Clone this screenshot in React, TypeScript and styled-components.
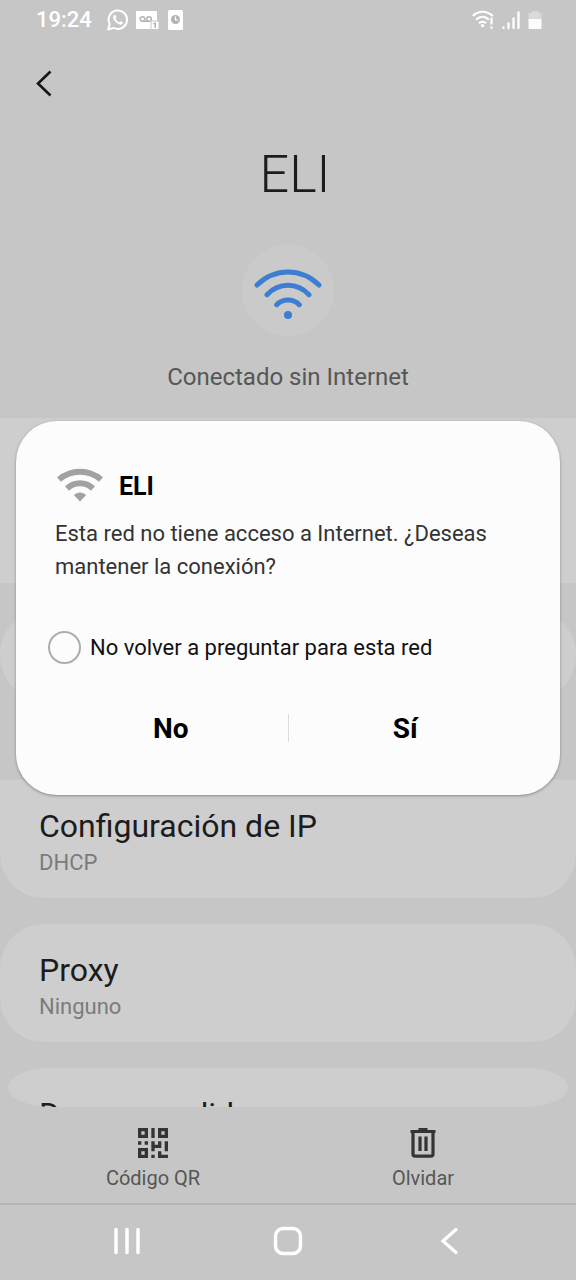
import React from 'react';
import styled, { createGlobalStyle } from 'styled-components';

const GlobalStyle = createGlobalStyle`
  * { box-sizing: border-box; }
  html, body, #root { height: 100%; }
  body { margin: 0; background: #c6c6c6; font-family: Roboto, sans-serif; color: #1c1c1c; }
  button { border: 0; padding: 0; background: none; font: inherit; color: inherit; cursor: pointer; }
  svg { display: block; }
  h1, h2, p { margin: 0; }
`;

const Screen = styled.div`
  position: relative;
  display: flex;
  flex-direction: column;
  height: 100vh;
  overflow: hidden;
`;

const StatusBar = styled.header`
  display: flex;
  flex: none;
  align-items: center;
  justify-content: space-between;
  height: 40px;
  padding: 0 34px 0 36px;
  color: #fff;
`;

const StatusGroup = styled.div<{ $gap: number }>`
  display: flex;
  align-items: center;
  gap: ${({ $gap }) => $gap}px;
`;

const Clock = styled.time`
  margin-right: 8px;
  font-size: 22px;
  font-weight: 500;
  line-height: 24px;
`;

const Toolbar = styled.nav`
  flex: none;
  padding: 24px 32px;
`;

const BackButton = styled.button`
  display: block;
  width: 24px;
  height: 38px;
`;

const Content = styled.main`
  flex: 1;
  min-height: 0;
  overflow: hidden;
`;

const Hero = styled.section`
  display: flex;
  flex-direction: column;
  align-items: center;
  height: 292px;
  padding-top: 17px;
`;

const NetworkName = styled.h1`
  padding-left: 14px;
  font-size: 52px;
  font-weight: 300;
  line-height: 64px;
`;

const SignalBadge = styled.div`
  display: grid;
  place-items: center;
  width: 92px;
  height: 92px;
  margin: 37px 0 25px;
  border-radius: 50%;
  background: #cacaca;
`;

const HeroStatus = styled.p`
  font-size: 24px;
  line-height: 32px;
  color: #565656;
`;

const Panel = styled.section<{ $height: number; $gap?: number; $shape?: string }>`
  height: ${({ $height }) => $height}px;
  margin-bottom: ${({ $gap = 0 }) => $gap}px;
  border-radius: ${({ $shape = '0' }) => $shape};
  background: #cecece;
`;

const Setting = styled.button`
  display: block;
  width: 100%;
  padding: 26px 39px 0;
  text-align: left;
`;

const SettingTitle = styled.span`
  display: block;
  font-size: 32px;
  line-height: 40px;
`;

const SettingValue = styled.span`
  display: block;
  font-size: 22px;
  line-height: 33px;
  color: #7b7b7b;
`;

const ClippedPanel = styled.section`
  height: 39px;
  margin: 0 8px;
  padding: 26px 31px 0;
  overflow: hidden;
  border-radius: 44px / 20px;
  background: #cecece;
`;

const ActionBar = styled.footer`
  display: flex;
  flex: none;
  height: 98px;
  padding: 0 18px;
  border-bottom: 2px solid #b4b4b4;
`;

const Action = styled.button`
  display: flex;
  flex: 1;
  flex-direction: column;
  align-items: center;
  gap: 8px;
  padding-top: 21px;
  font-size: 20px;
  line-height: 24px;
  color: #565656;
`;

const NavigationBar = styled.nav`
  display: grid;
  flex: none;
  grid-template-columns: repeat(3, 1fr);
  height: 75px;
  padding: 0 46px 3px;
  color: #fff;
`;

const NavigationButton = styled.button`
  display: grid;
  place-items: center;
`;

const Dialog = styled.section`
  position: absolute;
  top: 421px;
  left: 16px;
  right: 16px;
  padding: 40px 32px 42px;
  border-radius: 41px;
  background: #fcfcfc;
  box-shadow: 0 1px 3px rgba(0, 0, 0, 0.35);
`;

const DialogHeading = styled.div`
  display: flex;
  align-items: center;
  gap: 15px;
  height: 48px;
  padding-left: 8px;
`;

const DialogTitle = styled.h2`
  padding-top: 3px;
  font-size: 25px;
  font-weight: 700;
  line-height: 32px;
  color: #000;
`;

const DialogText = styled.p`
  padding: 8px 7px 0;
  font-size: 22px;
  line-height: 33px;
  color: #333;
`;

const Choice = styled.label`
  display: flex;
  align-items: center;
  gap: 9px;
  margin-top: 47px;
  font-size: 22px;
  line-height: 32px;
  color: #111;
`;

const ChoiceText = styled.span`
  padding-top: 2px;
`;

const RoundCheckbox = styled.input`
  appearance: none;
  width: 33px;
  height: 33px;
  margin: 0;
  border: 2px solid #adadad;
  border-radius: 50%;
  &:checked { background: #3d7dd2; }
`;

const DialogActions = styled.div`
  display: flex;
  align-items: center;
  margin-top: 41px;
  padding: 0 6px;
`;

const DialogButton = styled.button`
  flex: 1;
  font-size: 28px;
  font-weight: 700;
  line-height: 48px;
  color: #000;
`;

const Divider = styled.span`
  width: 1px;
  height: 28px;
  margin-bottom: 3px;
  background: #dcdcdc;
`;

const WhatsAppIcon = () => (
  <svg width="22" height="22" viewBox="0 0 22 22" fill="none" aria-hidden="true">
    <path d="M1.200 20.500l1.500-5.500A9.200 9.200 0 1 1 6.700 18.900z" stroke="currentColor" strokeWidth="2" strokeLinejoin="round" />
    <path d="M7.2 6.1c.5-.5 1.1-.4 1.4.2l.8 1.8c.2.5-.6 1.1-.8 1.6.7 1.6 1.9 2.800 3.600 3.600.5-.1 1.100-1.300 1.600-1.100l1.900 1c.6.3.1 1.600-.5 2.100-2.500 1.800-8.900-3.300-9.100-6.800 0-1 .5-1.800 1.100-2.400z" fill="currentColor" />
  </svg>
);

const VoicemailIcon = () => (
  <svg width="24" height="20" viewBox="0 0 24 20" fill="none" aria-hidden="true">
    <rect y="1" width="21" height="18" rx="1" fill="currentColor" />
    <circle cx="6.500" cy="9" r="2.300" stroke="#b4b4b4" strokeWidth="1.500" />
    <circle cx="13" cy="9" r="2.300" stroke="#b4b4b4" strokeWidth="1.500" />
    <path d="M6.500 11.300H13" stroke="#b4b4b4" strokeWidth="1.500" />
    <rect x="15" y="11" width="8" height="8.500" rx="1" fill="#fff" stroke="#c6c6c6" />
    <path d="M17.500 13.800l1.700-.6V18" stroke="#aaa" strokeWidth="1.300" />
  </svg>
);

const AlarmCardIcon = () => (
  <svg width="16" height="20" viewBox="0 0 16 20" fill="none" aria-hidden="true">
    <rect x="1" y="0" width="15" height="20" rx="1.500" fill="currentColor" />
    <circle cx="8.500" cy="9.500" r="4.500" fill="#b4b4b4" />
    <path d="M8.500 6.500v3.500H11" stroke="#fff" strokeWidth="1.200" />
  </svg>
);

const StatusWifiIcon = () => (
  <svg width="22" height="20" viewBox="0 0 22 20" fill="none" stroke="currentColor" strokeWidth="2.200" aria-hidden="true">
    <path d="M.8 6C6.500.3 14.500.3 20.800 6M4 9.800c4-3.800 9-3.800 13 0M7 13.300c2-2 5-2 7.200 0" />
    <circle cx="10.600" cy="15.600" r="1.700" fill="currentColor" stroke="none" />
    <path d="M19.500 7.500v7M19.500 16.500v2.200" />
  </svg>
);

const CellularIcon = () => (
  <svg width="18" height="20" viewBox="0 0 18 20" stroke="currentColor" strokeWidth="2.300" strokeLinecap="round" aria-hidden="true">
    <path d="M1.500 17.500v.5M6.500 13.500V18M11.500 8.500V18M16.500 2.500V18" />
  </svg>
);

const BatteryIcon = () => (
  <svg width="14" height="20" viewBox="0 0 14 20" fill="currentColor" aria-hidden="true">
    <path d="M.5 9V4q0-1 1-1H3.500V2q0-1 1-1h5q1 0 1 1v1h2q1 0 1 1v5z" opacity=".35" />
    <path d="M.5 9h13v9q0 1-1 1h-11q-1 0-1-1z" opacity=".95" />
  </svg>
);

const BackIcon = () => (
  <svg width="24" height="38" viewBox="0 0 24 38" fill="none" stroke="#151515" strokeWidth="2.600" aria-hidden="true">
    <path d="M18.500 7.500L6 19.500l12.500 12" />
  </svg>
);

const WifiLargeIcon = () => (
  <svg width="72" height="58" viewBox="0 0 72 58" fill="none" stroke="#3d7dd2" strokeWidth="5" strokeLinecap="round" aria-hidden="true">
    <path d="M5 24C23 6.700 49 6.700 67 24M15 33.700c12-12.500 30-12.500 42 0M24.700 43.700c6-6.300 16.600-6.300 22.600 0" />
    <circle cx="36" cy="54" r="4" fill="#3d7dd2" stroke="none" />
  </svg>
);

const WifiIcon = () => (
  <svg width="48" height="36" viewBox="0 0 48 36" fill="none" stroke="#a2a2a2" strokeWidth="6" aria-hidden="true">
    <path d="M3 12.500C15 2 33 2 45 12.500M11 21.500c7.500-7 18.500-7 26 0" />
    <path d="M18 28.200c3.500-3.500 8.500-3.500 12 0L24 34.500z" fill="#a2a2a2" stroke="none" />
  </svg>
);

const QrIcon = () => (
  <svg width="30" height="30" viewBox="0 0 9 9" fill="#343434" aria-hidden="true">
    <path fillRule="evenodd" d="M0 0h3v3H0zM1 1v1h1V1zM6 0h3v3H6zM7 1v1h1V1zM0 6h3v3H0zM1 7v1h1V7z" />
    <path d="M4 0h1v3H4zM0 4h1v1H0zM2 4h1v1H2zM4 4h1v1h1V4h1v2H5v1H4zM8 4h1v3H8zM4 8h1v1H4zM6 7h1v1h2v1H6z" />
  </svg>
);

const TrashIcon = () => (
  <svg width="26" height="30" viewBox="0 0 26 30" fill="none" stroke="#343434" strokeWidth="3.200" aria-hidden="true">
    <path d="M.5 3.500h25M8.500 1.600h9" />
    <path d="M3 4v22q0 2.200 2.200 2.200h15.600q2.200 0 2.200-2.200V4M10 8.500V23M16 8.500V23" />
  </svg>
);

const RecentsIcon = () => (
  <svg width="28" height="28" viewBox="0 0 28 28" stroke="currentColor" strokeWidth="3.500" strokeLinecap="round" aria-hidden="true">
    <path d="M3 2.500v23M14 2.500v23M25 2.500v23" />
  </svg>
);

const HomeIcon = () => (
  <svg width="30" height="30" viewBox="0 0 30 30" fill="none" stroke="currentColor" strokeWidth="3.500" aria-hidden="true">
    <rect x="2.500" y="2.500" width="25" height="25" rx="7.500" />
  </svg>
);

const NavBackIcon = () => (
  <svg width="20" height="28" viewBox="0 0 20 28" fill="none" stroke="currentColor" strokeWidth="3.200" strokeLinecap="round" aria-hidden="true">
    <path d="M17 2.500L4 14l13 11.500" />
  </svg>
);

export default function App() {
  return (
    <>
      <GlobalStyle />
      <Screen>
        <StatusBar>
          <StatusGroup $gap={7}>
            <Clock>19:24</Clock>
            <WhatsAppIcon />
            <VoicemailIcon />
            <AlarmCardIcon />
          </StatusGroup>
          <StatusGroup $gap={8}>
            <StatusWifiIcon />
            <CellularIcon />
            <BatteryIcon />
          </StatusGroup>
        </StatusBar>
        <Toolbar>
          <BackButton aria-label="Atrás"><BackIcon /></BackButton>
        </Toolbar>
        <Content>
          <Hero>
            <NetworkName>ELI</NetworkName>
            <SignalBadge><WifiLargeIcon /></SignalBadge>
            <HeroStatus>Conectado sin Internet</HeroStatus>
          </Hero>
          <Panel $height={165} $gap={27} />
          <Panel $height={90} $gap={80} $shape="44px" />
          <Panel $height={118} $gap={26} $shape="0 0 44px 44px">
            <Setting>
              <SettingTitle>Configuración de IP</SettingTitle>
              <SettingValue>DHCP</SettingValue>
            </Setting>
          </Panel>
          <Panel $height={118} $gap={26} $shape="44px">
            <Setting>
              <SettingTitle>Proxy</SettingTitle>
              <SettingValue>Ninguno</SettingValue>
            </Setting>
          </Panel>
          <ClippedPanel>
            <SettingTitle>De uso medido</SettingTitle>
          </ClippedPanel>
        </Content>
        <ActionBar>
          <Action><QrIcon />Código QR</Action>
          <Action><TrashIcon />Olvidar</Action>
        </ActionBar>
        <NavigationBar>
          <NavigationButton aria-label="Recientes"><RecentsIcon /></NavigationButton>
          <NavigationButton aria-label="Inicio"><HomeIcon /></NavigationButton>
          <NavigationButton aria-label="Volver"><NavBackIcon /></NavigationButton>
        </NavigationBar>
        <Dialog role="dialog" aria-labelledby="network-title">
          <DialogHeading>
            <WifiIcon />
            <DialogTitle id="network-title">ELI</DialogTitle>
          </DialogHeading>
          <DialogText>Esta red no tiene acceso a Internet. ¿Deseas mantener la conexión?</DialogText>
          <Choice>
            <RoundCheckbox type="checkbox" />
            <ChoiceText>No volver a preguntar para esta red</ChoiceText>
          </Choice>
          <DialogActions>
            <DialogButton>No</DialogButton>
            <Divider />
            <DialogButton>Sí</DialogButton>
          </DialogActions>
        </Dialog>
      </Screen>
    </>
  );
}
